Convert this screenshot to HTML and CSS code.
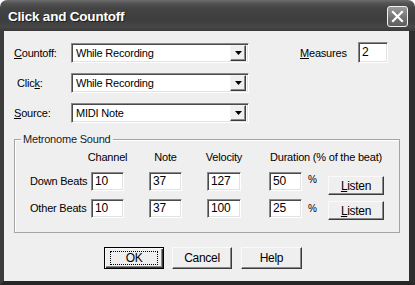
FILE: index.html
```html
<html>
	<head>
		<title>Click and Countoff</title>
		<link rel="stylesheet" href="styles.css">
	</head>
	<body>
		<div class="window">
			<div class="titlebar">
				<span class="title">Click and Countoff</span>
				<span class="close">
					<svg width="13" height="13" viewBox="0 0 13 13"><path d="M2 2 L11 11 M11 2 L2 11" stroke="#fff" stroke-width="2.2" stroke-linecap="square"/></svg>
				</span>
			</div>
			<div class="frame">
				<div class="content">
					<div class="row">
						<span class="lbl"><u>C</u>ountoff:</span>
						<div class="combo"><span class="combo-text">While Recording</span><span class="combo-btn"><svg width="7" height="4" viewBox="0 0 7 4"><path d="M0 0 H7 L3.5 4 Z" fill="#000"/></svg></span></div>
						<span class="measures-lbl"><u>M</u>easures</span>
						<div class="field measures">2</div>
					</div>
					<div class="row">
						<span class="lbl indent">Clic<u>k</u>:</span>
						<div class="combo"><span class="combo-text">While Recording</span><span class="combo-btn"><svg width="7" height="4" viewBox="0 0 7 4"><path d="M0 0 H7 L3.5 4 Z" fill="#000"/></svg></span></div>
					</div>
					<div class="row">
						<span class="lbl"><u>S</u>ource:</span>
						<div class="combo"><span class="combo-text">MIDI Note</span><span class="combo-btn"><svg width="7" height="4" viewBox="0 0 7 4"><path d="M0 0 H7 L3.5 4 Z" fill="#000"/></svg></span></div>
					</div>

					<fieldset class="group">
						<legend>Metronome Sound</legend>
						<div class="grid">
							<span></span>
							<span class="hdr"><span>Channel</span></span>
							<span class="hdr"><span>Note</span></span>
							<span class="hdr wide"><span>Velocity</span></span>
							<span class="hdr left">Duration (% of the beat)</span>
							<span></span>

							<span class="rowlbl">Down Beats</span>
							<div class="field num">10</div>
							<div class="field num">37</div>
							<div class="field num wide">127</div>
							<div class="dur"><div class="field num">50</div><span class="pct up">%</span></div>
							<div class="btn listen first"><u>L</u>isten</div>

							<span class="rowlbl">Other Beats</span>
							<div class="field num">10</div>
							<div class="field num">37</div>
							<div class="field num wide">100</div>
							<div class="dur"><div class="field num">25</div><span class="pct">%</span></div>
							<div class="btn listen"><u>L</u>isten</div>
						</div>
					</fieldset>

					<div class="buttons">
						<div class="btn default"><span class="focus">OK</span></div>
						<div class="btn">Cancel</div>
						<div class="btn help">Help</div>
					</div>
				</div>
			</div>
		</div>
	</body>
</html>
```

FILE: styles.css
```css
body{
	margin:0;
	background:#fff;
	font-family:"Liberation Sans", Arial, sans-serif;
	font-size:11px;
	letter-spacing:-0.2px;
	color:#000;
}
.window{
	width:415px;
	height:285px;
	display:flex;
	flex-direction:column;
}
.titlebar{
	height:31px;
	flex:none;
	display:flex;
	align-items:center;
	justify-content:space-between;
	padding:0 8px 0 8px;
	box-sizing:border-box;
	border-radius:7px 7px 0 0;
	background:linear-gradient(#6e6e6e 0px, #555 3px, #444 8px, #3e3e3e 20px, #464646 27px, #3a3a3a 31px);
}
.title{
	font-family:"Liberation Sans", Arial, sans-serif;
	font-weight:bold;
	font-size:13.5px;
	color:#fff;
	text-shadow:1px 1px 0 #1c1c1c;
	letter-spacing:-0.2px;
	margin-top:1px;
}
.close{
	width:19px;
	height:19px;
	border:1px solid #f2f2f2;
	border-radius:3px;
	background:linear-gradient(#9a9a9a, #707070 60%, #5e5e5e);
	display:flex;
	align-items:center;
	justify-content:center;
	margin-top:2px;
	margin-right:-1px;
}
.frame{
	flex:1;
	border-left:4px solid #3c3c3c;
	border-right:6px solid #2e2e2e;
	border-bottom:4px solid #262626;
	background:#efefef;
}
.content{
	padding:12px 0 0 10px;
}
.row{
	display:flex;
	align-items:center;
	height:20px;
	margin-bottom:10px;
}
.lbl{
	width:57px;
}
.lbl.indent{
	width:54px;
	padding-left:3px;
}
.field{
	box-sizing:border-box;
	background:#fff;
	border:1px solid;
	border-color:#8a8a8a #fff #fff #8a8a8a;
	box-shadow:inset 1px 1px #4a4a4a, inset -1px -1px #e2e2e2;
	padding:2px 0 0 3px;
}
.combo{
	box-sizing:border-box;
	width:178px;
	height:20px;
	background:#fff;
	border:1px solid;
	border-color:#8a8a8a #fff #fff #8a8a8a;
	box-shadow:inset 1px 1px #4a4a4a, inset -1px -1px #e2e2e2;
	display:flex;
	align-items:center;
	justify-content:space-between;
	padding:2px 2px 2px 4px;
}
.combo-btn{
	box-sizing:border-box;
	width:16px;
	height:16px;
	background:#efefef;
	border:1px solid;
	border-color:#f4f4f4 #3c3c3c #3c3c3c #f4f4f4;
	box-shadow:inset -1px -1px #8a8a8a;
	display:flex;
	align-items:center;
	justify-content:center;
}
.measures-lbl{
	margin-left:51px;
	width:58px;
}
.measures{
	width:30px;
	height:21px;
	font-size:12px;
	margin-top:-1px;
}
.group{
	margin:9px 0 0 0;
	width:386px;
	box-sizing:border-box;
	border:1px solid #a4a4a4;
	box-shadow:inset 1px 1px #fff;
	padding:5px 0 14px 6px;
}
.group legend{
	padding:0 2px;
	line-height:13px;
	color:#1a1a1a;
}
.grid{
	display:grid;
	grid-template-columns:70px 58px 58px 62px 59px 56px;
	grid-template-rows:13px 19px 19px;
	row-gap:8px;
	align-items:start;
}
.grid .hdr{
	width:33px;
	display:flex;
	justify-content:center;
	white-space:nowrap;
	line-height:13px;
}
.grid .hdr.wide{
	width:34px;
}
.grid .hdr.left{
	justify-content:flex-start;
	margin-left:1px;
}
.rowlbl{
	padding-left:9px;
	line-height:19px;
	white-space:nowrap;
}
.num{
	width:33px;
	height:19px;
	font-size:12px;
	line-height:15px;
	padding-top:1px;
}
.num.wide{
	width:34px;
}
.dur{
	display:flex;
	align-items:center;
}
.pct{
	margin-left:6px;
	font-size:10px;
}
.pct.up{
	align-self:flex-start;
	margin-top:2px;
}
.btn{
	box-sizing:border-box;
	height:22px;
	width:60px;
	background:#efefef;
	border:1px solid;
	border-color:#fafafa #3a3a3a #3a3a3a #fafafa;
	box-shadow:inset -1px -1px #8a8a8a;
	display:flex;
	align-items:center;
	justify-content:center;
	font-size:12px;
	letter-spacing:-0.3px;
}
.listen{
	width:56px;
	height:19px;
	margin-top:2px;
}
.listen.first{
	margin-top:4px;
}
.buttons{
	display:flex;
	gap:8px;
	margin-top:14px;
	padding-left:90px;
}
.btn.default{
	border:1px solid #000;
	box-shadow:inset 1px 1px #fafafa, inset -1px -1px #3a3a3a, inset -2px -2px #8a8a8a;
}
.focus{
	box-sizing:border-box;
	width:48px;
	height:14px;
	border:1px dotted #000;
	display:flex;
	align-items:center;
	justify-content:center;
}
.btn.help{
	width:61px;
	margin-left:1px;
}
```
